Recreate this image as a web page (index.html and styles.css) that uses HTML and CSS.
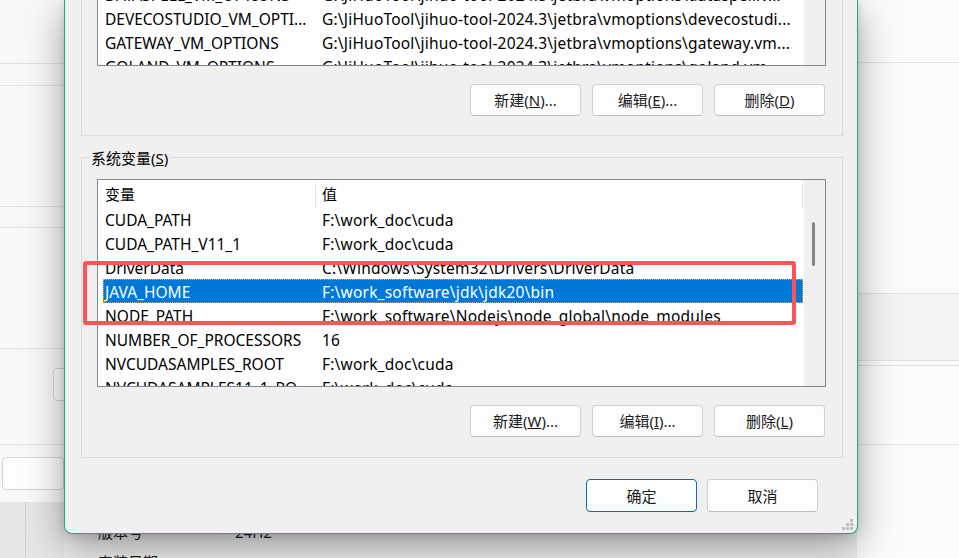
FILE: index.html
```html
<!DOCTYPE html>
<html lang="zh-CN">
<head>
<meta charset="utf-8">
<title>环境变量</title>
<link rel="stylesheet" href="styles.css">
</head>
<body>
<div class="page">
  <div class="pane-left">
    <div class="seg l1"></div>
    <div class="seg l2"></div>
    <div class="seg l3"></div>
    <div class="seg l4"></div>
    <div class="seg l5"></div>
    <div class="seg l6"><div class="bgbtn b1"></div></div>
    <div class="seg l7"><div class="bgbtn b2"></div><div class="bgbtn b3"></div></div>
    <div class="seg l8"><div class="vline"></div></div>
  </div>
  <div class="pane-mid">
    <div class="info-row"><span class="info-k">版本号</span><span class="info-v">24H2</span></div>
    <div class="info-row"><span class="info-k">安装日期</span><span class="info-v">2025/3/17</span></div>
  </div>
  <div class="pane-right">
    <div class="seg r1"></div>
    <div class="seg r2"></div>
    <div class="seg r3"></div>
    <div class="seg r4"></div>
    <div class="seg r5"></div>
    <div class="seg r6"></div>
  </div>
</div>

<div class="dialog">
  <div class="group group-top">
    <div class="list list-top">
      <div class="list-body">
        <div class="rows rows-top">
          <div class="row"><span class="c1">DATASPELL_VM_OPTIONS</span><span class="c2">G:\JiHuoTool\jihuo-tool-2024.3\jetbra\vmoptions\dataspell.v...</span></div>
          <div class="row"><span class="c1">DEVECOSTUDIO_VM_OPTI...</span><span class="c2">G:\JiHuoTool\jihuo-tool-2024.3\jetbra\vmoptions\devecostudi...</span></div>
          <div class="row"><span class="c1">GATEWAY_VM_OPTIONS</span><span class="c2">G:\JiHuoTool\jihuo-tool-2024.3\jetbra\vmoptions\gateway.vm...</span></div>
          <div class="row"><span class="c1">GOLAND_VM_OPTIONS</span><span class="c2">G:\JiHuoTool\jihuo-tool-2024.3\jetbra\vmoptions\goland.vm...</span></div>
        </div>
      </div>
      <div class="vscroll"></div>
    </div>
    <div class="btnrow">
      <button class="btn">新建(<u>N</u>)...</button>
      <button class="btn">编辑(<u>E</u>)...</button>
      <button class="btn">删除(<u>D</u>)</button>
    </div>
  </div>

  <div class="group group-sys">
    <span class="legend">系统变量(<u>S</u>)</span>
    <div class="list list-sys">
      <div class="list-body">
        <div class="header"><span class="h1">变量</span><span class="h2">值</span></div>
        <div class="rows">
          <div class="row"><span class="c1">CUDA_PATH</span><span class="c2">F:\work_doc\cuda</span></div>
          <div class="row"><span class="c1">CUDA_PATH_V11_1</span><span class="c2">F:\work_doc\cuda</span></div>
          <div class="row"><span class="c1">DriverData</span><span class="c2">C:\Windows\System32\Drivers\DriverData</span></div>
          <div class="row selected"><span class="c1">JAVA_HOME</span><span class="c2">F:\work_software\jdk\jdk20\bin</span></div>
          <div class="row"><span class="c1">NODE_PATH</span><span class="c2">F:\work_software\Nodejs\node_global\node_modules</span></div>
          <div class="row"><span class="c1">NUMBER_OF_PROCESSORS</span><span class="c2">16</span></div>
          <div class="row"><span class="c1">NVCUDASAMPLES_ROOT</span><span class="c2">F:\work_doc\cuda</span></div>
          <div class="row"><span class="c1">NVCUDASAMPLES11_1_RO...</span><span class="c2">F:\work_doc\cuda</span></div>
        </div>
      </div>
      <div class="vscroll"><div class="thumb"></div></div>
    </div>
    <div class="btnrow">
      <button class="btn">新建(<u>W</u>)...</button>
      <button class="btn">编辑(<u>I</u>)...</button>
      <button class="btn">删除(<u>L</u>)</button>
    </div>
  </div>

  <div class="footer">
    <button class="btn btn-default">确定</button>
    <button class="btn">取消</button>
  </div>

  <div class="highlight"></div>
  <div class="grip">
    <span class="dot d1"></span><span class="dot d2"></span><span class="dot d3"></span>
    <span class="dot d4"></span><span class="dot d5"></span><span class="dot d6"></span>
  </div>
</div>
</body>
</html>
```
FILE: styles.css
```css
* { box-sizing: border-box; }
html, body { margin: 0; padding: 0; }
body {
  width: 959px;
  height: 558px;
  overflow: hidden;
  position: relative;
  font-family: "Noto Sans", "Noto Sans CJK SC", sans-serif;
  font-size: 15px;
  color: #000;
  background: #f8f8f8;
}

/* ---------- background settings page ---------- */
.page { display: flex; height: 558px; }
.pane-left { width: 64px; flex: none; display: flex; flex-direction: column; background: #f8f8f8; }
.pane-mid { flex: 1; display: flex; flex-direction: column; padding: 517px 0 0 34px; background: #ececec; }
.pane-right { width: 102px; flex: none; display: flex; flex-direction: column; background: #fbfbfb; }

.seg { flex: none; border-bottom: 1px solid #e2e2e2; }
.l1 { height: 64px; }
.l2 { height: 22px; }
.l3 { height: 121px; }
.l4 { height: 21px; }
.l5 { height: 121px; }
.l6 { height: 96px; padding: 19px 0 0 53px; }
.l7 { height: 57px; padding-top: 12px; display: flex; gap: 12px; border-bottom: none; }
.l8 { flex: 1; background: #e6e6e6; border-bottom: none; }
.vline { width: 26px; height: 100%; border-right: 1px solid #d2d2d2; }

.bgbtn { height: 33px; background: #fdfdfd; border: 1px solid #d6d6d6; border-radius: 4px; }
.b1 { width: 100px; }
.b2 { width: 98px; margin-left: -70px; }
.b3 { width: 100px; }

.info-row { display: flex; line-height: 30px; height: 30px; color: #1c1c1c; }
.info-k { width: 137px; }

.r1 { height: 63px; }
.r2 { height: 231px; }
.r3 { height: 67px; background: #f3f3f3; }
.r4 { height: 5px; }
.r5 { height: 79px; }
.r6 { flex: 1; border-bottom: none; }

/* ---------- dialog window ---------- */
.dialog {
  position: absolute;
  left: 64px;
  top: 0;
  width: 794px;
  height: 534px;
  background: #f0f0f0;
  border: 1px solid #1ea58d;
  border-top: none;
  border-radius: 0 0 8px 8px;
  box-shadow: 0 12px 38px rgba(0, 0, 0, 0.36), 0 2px 8px rgba(0, 0, 0, 0.12);
  display: flex;
  flex-direction: column;
}

.group {
  margin: 0 14px 0 16px;
  border: 1px solid #dcdcdc;
}
.group-top { border-top: none; padding-bottom: 19px; }
.group-sys { margin-top: 21px; padding-bottom: 20px; }

.legend {
  display: block;
  width: max-content;
  margin: -10px 0 0 7px;
  padding: 0 2px;
  line-height: 20px;
  height: 20px;
  background: #f0f0f0;
}

.list {
  display: flex;
  margin: 0 16px 0 15px;
  background: #fff;
  border: 1px solid #828790;
  overflow: hidden;
  font-size: 15.5px;
}
.list-top { height: 66px; border-top: none; }
.list-sys { height: 208px; margin-top: 11px; }

.list-body { flex: 1; padding-left: 5px; overflow: hidden; }
.vscroll { width: 21px; flex: none; background: #f0f0f0; position: relative; padding: 42px 0 0 8px; }
.thumb { width: 3px; height: 44px; background: #858585; border-radius: 2px; }

.rows-top { margin-top: -18px; }

.header { display: flex; height: 27px; align-items: center; width: 700px; font-size: 15px; }
.h1 { width: 213px; padding-left: 2px; height: 26px; line-height: 27px; border-right: 1px solid #e5e5e5; }
.h2 { flex: 1; padding-left: 6px; height: 26px; line-height: 27px; border-right: 1px solid #e5e5e5; }

.row { display: flex; height: 24px; line-height: 26px; width: 700px; white-space: nowrap; overflow: hidden; }
.c1 { width: 213px; padding-left: 2px; overflow: hidden; }
.c2 { flex: 1; padding-left: 6px; overflow: hidden; letter-spacing: 0.2px; }
.row.selected { background: #0078d7; color: #fff; outline: 1px dotted #f7a348; outline-offset: -1px; }

.btnrow { display: flex; justify-content: flex-end; gap: 11px; margin: 18px 17px 0 0; }
.btn {
  font: inherit;
  color: #1b1b1b;
  width: 111px;
  height: 32px;
  padding: 0;
  background: #fdfdfd;
  border: 1px solid #d0d0d0;
  border-bottom-color: #bdbdbd;
  border-radius: 4px;
  line-height: 28px;
}
.footer { display: flex; justify-content: flex-end; gap: 10px; margin: 21px 39px 0 0; }
.footer .btn { height: 33px; }
.btn-default { border: 1px solid #0a68c4; }

.highlight {
  position: absolute;
  left: 18px;
  top: 261px;
  width: 713px;
  height: 64px;
  border: 4px solid #fd5454;
  border-radius: 3px;
}

.grip { position: absolute; right: 4px; bottom: 3px; width: 10px; height: 10px; }
.dot { position: absolute; width: 3px; height: 3px; background: #bdbdbd; }
.d1 { right: 0; bottom: 0; }
.d2 { right: 4px; bottom: 0; }
.d3 { right: 8px; bottom: 0; }
.d4 { right: 0; bottom: 4px; }
.d5 { right: 4px; bottom: 4px; }
.d6 { right: 0; bottom: 8px; }
```
